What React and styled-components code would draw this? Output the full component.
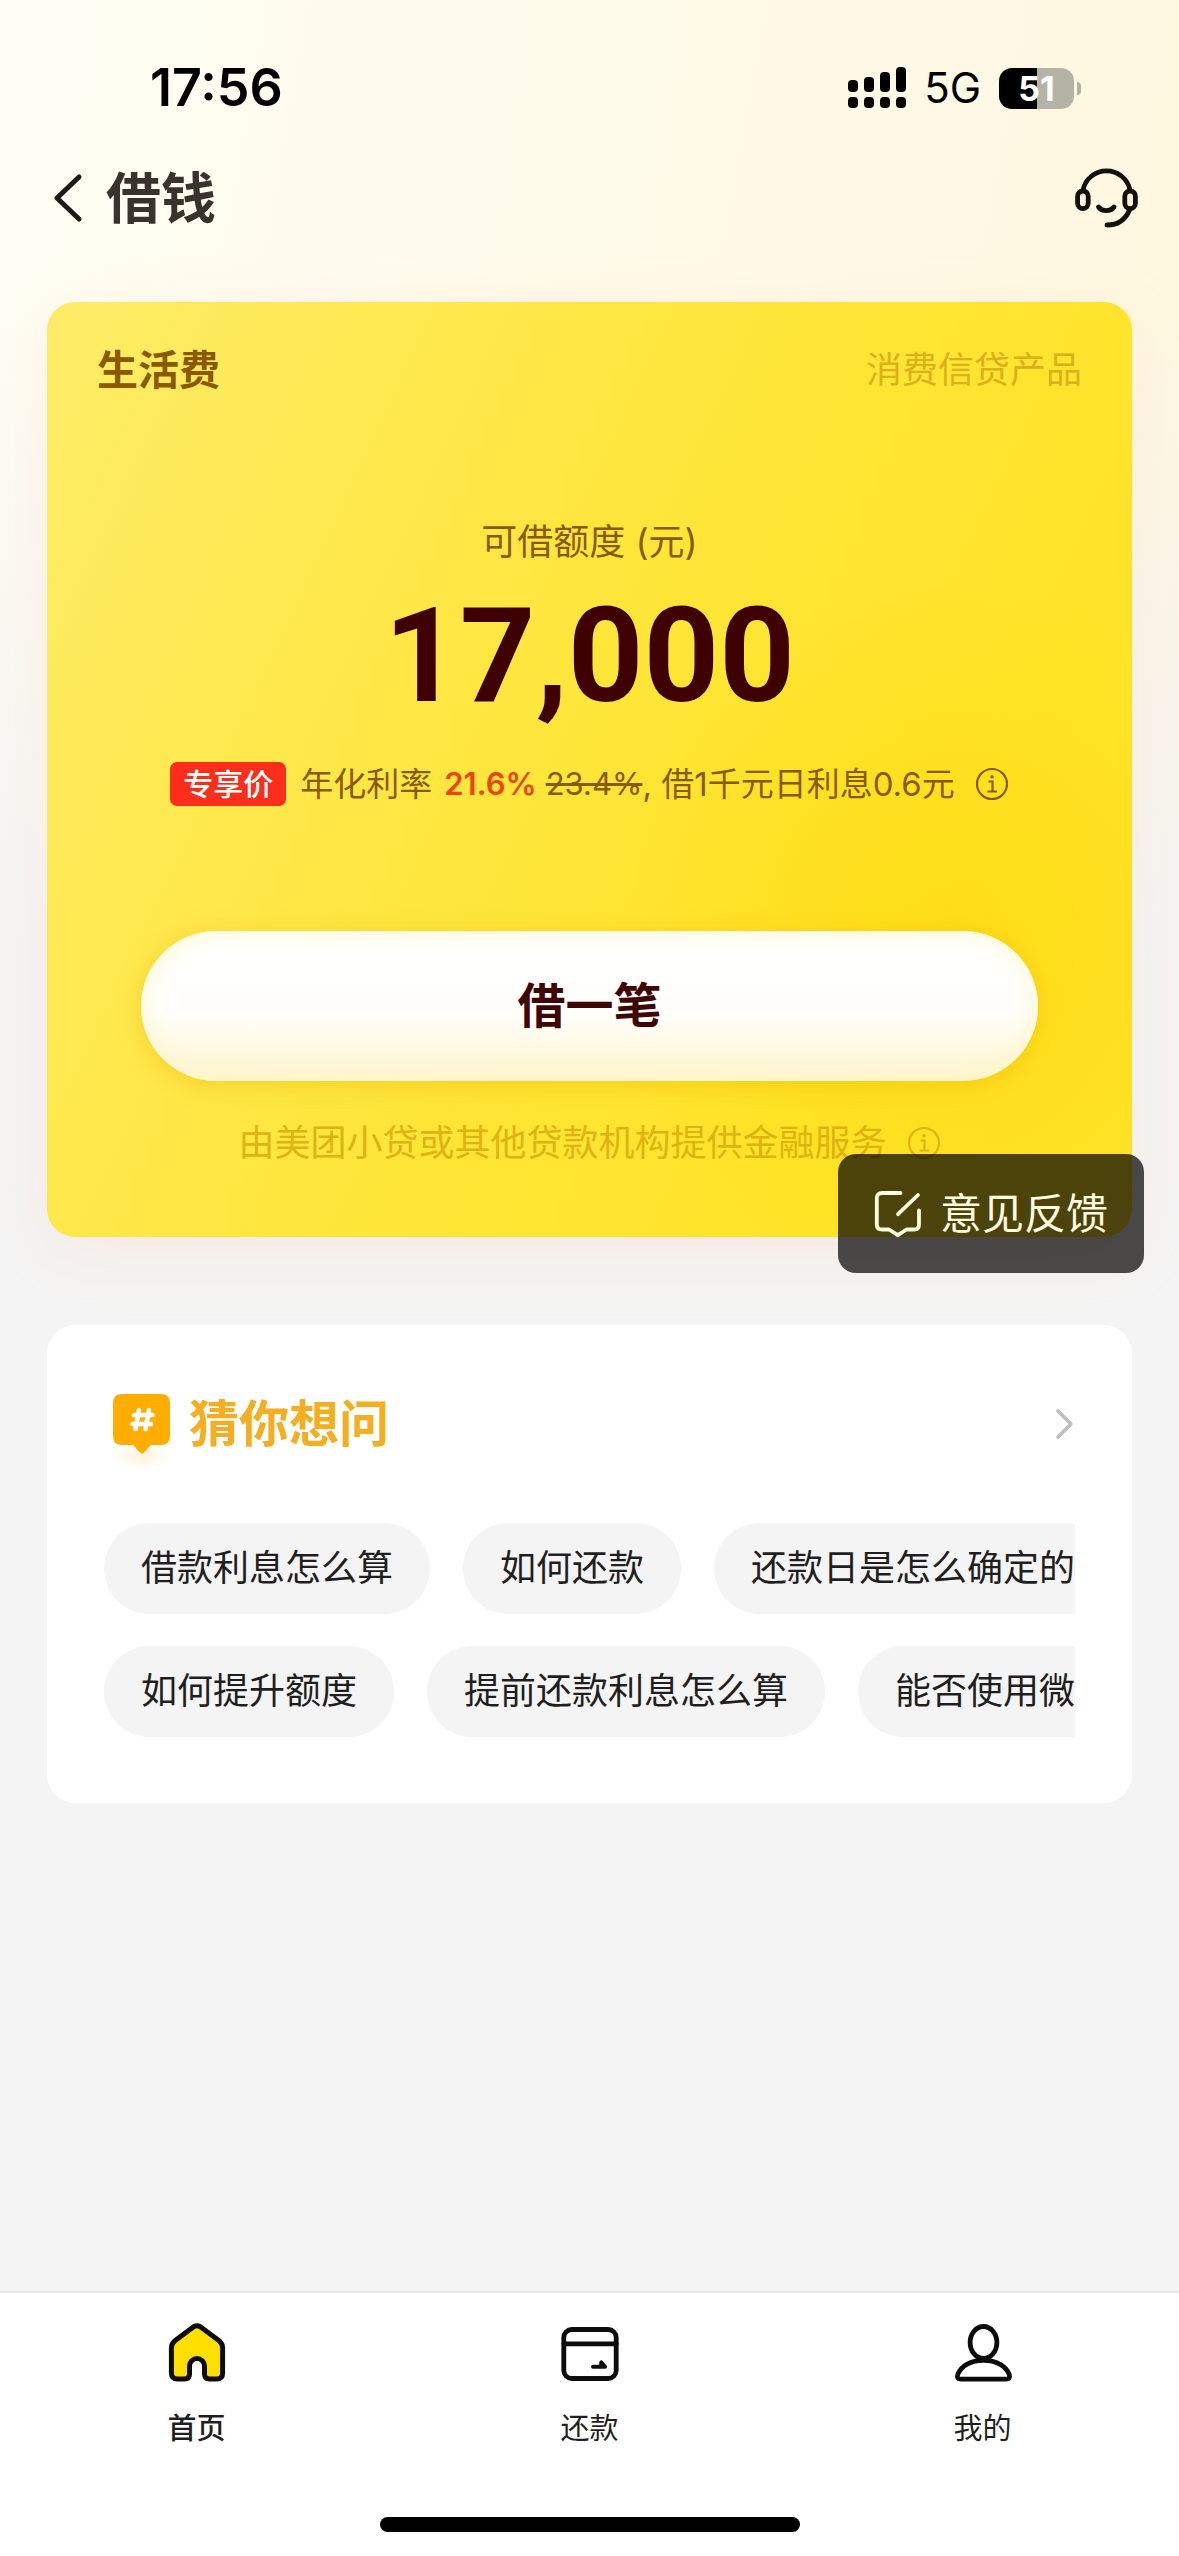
import React from "react";
import styled, { createGlobalStyle } from "styled-components";

// ---------- Global ----------
const GlobalStyle = createGlobalStyle`
  * {
    box-sizing: border-box;
  }
  body {
    margin: 0;
    background: #f4f4f4;
    font-family: Inter, "Noto Sans CJK SC", sans-serif;
    color: #1f1f1f;
  }
  button {
    border: 0;
    padding: 0;
    background: none;
    font-family: inherit;
    color: inherit;
    cursor: pointer;
  }
  a {
    color: inherit;
    text-decoration: none;
  }
  svg {
    display: block;
    flex: none;
  }
`;

// ---------- Styled Components ----------
const Page = styled.div`
  min-height: 100vh;
  display: flex;
  flex-direction: column;
  background:
    linear-gradient(180deg, rgba(244, 244, 244, 0) 300px, #f4f4f4 960px),
    linear-gradient(100deg, #fffdf4 0%, #fefaea 35%, #fef8e2 70%, #fdf4d9 100%);
`;

const StatusBar = styled.div`
  display: flex;
  justify-content: space-between;
  align-items: center;
  padding: 56px 98px 0 150px;
  line-height: 64px;
  color: #000;
`;

const Clock = styled.time`
  font-size: 52px;
  font-weight: 600;
`;

const StatusIcons = styled.div`
  display: flex;
  align-items: center;
  gap: 18px;
`;

const Network = styled.span`
  font-size: 42px;
`;

const Battery = styled.span`
  display: flex;
  align-items: center;
  gap: 3px;
  &::after {
    content: "";
    width: 4px;
    height: 13px;
    border-radius: 0 6px 6px 0;
    background: #b5b3a6;
  }
`;

const BatteryLevel = styled.span`
  width: 75px;
  border-radius: 13px;
  background: linear-gradient(90deg, #000 51%, #b5b3a6 51%);
  color: #fff;
  font-size: 34px;
  font-weight: 700;
  line-height: 41px;
  text-align: center;
`;

const NavBar = styled.header`
  display: flex;
  justify-content: space-between;
  align-items: center;
  padding: 0 40px 0 52px;
  height: 156px;
`;

const BackButton = styled.button`
  display: flex;
  align-items: center;
  gap: 22px;
`;

const PageTitle = styled.h1`
  margin: 0;
  font-size: 55px;
  line-height: 64px;
  font-weight: 700;
  color: #3a322c;
`;

const Main = styled.main`
  flex: 1;
  display: flex;
  flex-direction: column;
  gap: 88px;
  padding: 26px 47px 48px;
`;

const LoanCard = styled.section`
  position: relative;
  display: flex;
  flex-direction: column;
  align-items: center;
  padding: 44px 50px 70px;
  border-radius: 28px;
  color: #8a5a00;
  background:
    radial-gradient(circle at 84% 68%, rgba(255, 219, 18, 0.8) 0%, rgba(255, 222, 24, 0) 32%),
    linear-gradient(115deg, #fdec68 0%, #fee84c 28%, #fee536 52%, #fee428 78%, #ffe32c 100%);
  box-shadow: 0 16px 60px rgba(255, 205, 180, 0.26);
`;

const CardHeader = styled.div`
  align-self: stretch;
  display: flex;
  justify-content: space-between;
  align-items: center;
  line-height: 48px;
`;

const ProductName = styled.h2`
  margin: 0;
  font-size: 41px;
  font-weight: 700;
`;

const ProductKind = styled.span`
  font-size: 36px;
  color: #dcb01a;
`;

const QuotaLabel = styled.p`
  margin: 124px 0 0;
  font-size: 36px;
  line-height: 48px;
`;

const Quota = styled.strong`
  margin-top: 20px;
  font-family: Roboto, sans-serif;
  font-size: 132px;
  line-height: 140px;
  font-weight: 700;
  color: #3f0000;
`;

const RateRow = styled.div`
  display: flex;
  align-items: center;
  margin-top: 36px;
  font-size: 33px;
  line-height: 44px;
  white-space: nowrap;
`;

const RateTag = styled.span`
  margin-right: 14px;
  padding: 0 13px;
  border-radius: 7px;
  background: #fb2e1b;
  color: #fff;
  font-size: 30px;
  font-weight: 500;
`;

const Rate = styled.b`
  margin: 0 9px 0 12px;
  font-size: 31px;
  font-weight: 600;
  color: #ee4408;
`;

const OldRate = styled.s`
  font-size: 31px;
`;

const InfoButton = styled.button`
  margin-left: 20px;
  color: inherit;
`;

const BorrowButton = styled.button`
  align-self: stretch;
  margin: 125px 44px 0;
  border-radius: 75px;
  background: linear-gradient(180deg, #fff 0%, #fffefa 55%, #fdf5cf 100%);
  box-shadow:
    inset 0 0 24px rgba(255, 245, 190, 0.8),
    0 4px 24px rgba(236, 176, 0, 0.4);
  color: #3f0606;
  font-size: 48px;
  line-height: 150px;
  font-weight: 700;
`;

const Provider = styled.div`
  display: flex;
  align-items: center;
  margin-top: 38px;
  font-size: 36px;
  line-height: 48px;
  color: #deb312;
  white-space: nowrap;
`;

// floats over the lower right corner of the loan card
const FeedbackButton = styled.button`
  position: absolute;
  right: -12px;
  bottom: -36px;
  display: flex;
  align-items: center;
  gap: 18px;
  padding: 0 36px;
  border-radius: 18px;
  background: rgba(0, 0, 0, 0.7);
  color: #fffbe0;
  font-size: 42px;
  line-height: 119px;
`;

const FaqCard = styled.section`
  padding: 69px 57px 66px;
  border-radius: 28px;
  background: #fff;
`;

const FaqHeader = styled.a`
  display: flex;
  align-items: center;
  gap: 18px;
  padding-left: 9px;
`;

const FaqTitle = styled.h2`
  flex: 1;
  margin: 0;
  font-size: 50px;
  line-height: 60px;
  font-weight: 700;
  color: #f5ae20;
`;

const ChipRows = styled.div`
  display: grid;
  gap: 32px;
  margin-top: 69px;
  overflow: hidden;
`;

const ChipRow = styled.div`
  display: flex;
  gap: 33px;
`;

const Chip = styled.button`
  flex: none;
  padding: 0 37px;
  border-radius: 46px;
  background: #f4f4f4;
  font-size: 36px;
  line-height: 91px;
  white-space: nowrap;
`;

const Footer = styled.footer`
  display: flex;
  flex-direction: column;
  align-items: center;
  border-top: 2px solid #e6e8e8;
  background: #fff;
  padding-bottom: 24px;
`;

const TabBar = styled.nav`
  align-self: stretch;
  display: grid;
  grid-template-columns: repeat(3, 1fr);
  padding: 29px 0 68px;
`;

const Tab = styled.a`
  display: flex;
  flex-direction: column;
  align-items: center;
  gap: 27px;
  font-size: 29px;
  line-height: 40px;
  font-weight: ${(props) => (props.$active ? 500 : 400)};
`;

const HomeIndicator = styled.div`
  width: 420px;
  height: 15px;
  border-radius: 8px;
  background: #000;
`;

// ---------- Icons ----------
const SignalIcon = () => (
  <svg width="58" height="42" viewBox="0 0 58 42" fill="#000" aria-hidden="true">
    <rect x="0" y="13" width="10" height="12" rx="4" />
    <rect x="16" y="10" width="10" height="15" rx="4" />
    <rect x="32" y="5" width="10" height="20" rx="4" />
    <rect x="48" y="0" width="10" height="25" rx="4" />
    <rect x="0" y="30" width="10" height="11" rx="4" />
    <rect x="16" y="30" width="10" height="11" rx="4" />
    <rect x="32" y="30" width="10" height="11" rx="4" />
    <rect x="48" y="30" width="10" height="11" rx="4" />
  </svg>
);

const BackIcon = () => (
  <svg width="32" height="50" viewBox="0 0 32 50" fill="none" stroke="#1f1a17" strokeWidth="5" strokeLinecap="round" strokeLinejoin="round" aria-hidden="true">
    <path d="M27 4 L5 25 L27 46" />
  </svg>
);

const HeadsetIcon = () => (
  <svg width="64" height="60" viewBox="0 0 64 60" fill="none" stroke="#14100c" strokeWidth="4.8" strokeLinecap="round" aria-hidden="true">
    <path d="M8 22 A24 24 0 0 1 55 22" />
    <rect x="2.6" y="23" width="10.6" height="17.6" rx="5.3" />
    <rect x="49.8" y="23" width="10.6" height="17.6" rx="5.3" />
    <path d="M54.5 42 C50.5 51.5 42.5 57 32 57" />
    <path d="M23.5 39 C27 43.8 35.5 43.8 39 39" />
  </svg>
);

const InfoIcon = () => (
  <svg width="34" height="34" viewBox="0 0 34 34" fill="none" stroke="currentColor" strokeWidth="2.2" aria-hidden="true">
    <circle cx="17" cy="17" r="15" />
    <path d="M13.5 14.5 H17.5 V24.5 M12.5 24.5 H22" />
    <circle cx="17" cy="9.8" r="1.7" fill="currentColor" stroke="none" />
  </svg>
);

const FeedbackIcon = () => (
  <svg width="48" height="48" viewBox="0 0 48 48" fill="none" stroke="currentColor" strokeWidth="3.8" strokeLinecap="round" strokeLinejoin="round" aria-hidden="true">
    <path d="M26.5 3 H8 Q2.8 3 2.8 8 V34.5 Q2.8 39.5 8 39.5 H15 L23.8 45.2 L32.5 39.5 H40 Q45 39.5 45 34.5 V20.5" />
    <path d="M24 24.2 L44 5" />
  </svg>
);

const HashIcon = () => (
  <svg width="58" height="60" viewBox="0 0 58 60" overflow="visible" aria-hidden="true">
    <defs>
      <radialGradient id="glow">
        <stop offset="0" stopColor="#ffb000" stopOpacity="0.16" />
        <stop offset="1" stopColor="#ffb000" stopOpacity="0" />
      </radialGradient>
    </defs>
    <ellipse cx="29" cy="62" rx="28" ry="14" fill="url(#glow)" />
    <path d="M9 0 H48 Q57 0 57 9 V42 Q57 51 48 51 H38 L31 58.5 Q29 60.5 27 58.5 L20 51 H9 Q0 51 0 42 V9 Q0 0 9 0Z" fill="#ffae00" />
    <path d="M26 16 L22.5 35 M36 16 L32.5 35 M21 21 H39.5 M19.5 30 H38" stroke="#fff" strokeWidth="4.6" strokeLinecap="round" />
  </svg>
);

const ArrowIcon = () => (
  <svg width="20" height="32" viewBox="0 0 20 32" fill="none" stroke="#bdbdbd" strokeWidth="3.6" strokeLinecap="round" strokeLinejoin="round" aria-hidden="true">
    <path d="M3 3 L16 16 L3 29" />
  </svg>
);

const HomeIcon = () => (
  <svg width="60" height="60" viewBox="0 0 60 60" fill="#ffdf00" stroke="#0c0c0c" strokeWidth="5" strokeLinejoin="round" aria-hidden="true">
    <path d="M27 4.6 Q30 2.8 33 4.6 L51.5 18.2 Q55.6 21.3 55.6 26 V51 Q55.6 57 49.6 57 H42.5 Q37.5 57 37.5 52 V44 A7.5 7.5 0 0 0 22.5 44 V52 Q22.5 57 17.5 57 H10.4 Q4.4 57 4.4 51 V26 Q4.4 21.3 8.5 18.2 Z" />
  </svg>
);

const RepayIcon = () => (
  <svg width="60" height="60" viewBox="0 0 60 60" fill="none" stroke="#0c0c0c" strokeWidth="4.8" strokeLinecap="round" strokeLinejoin="round" aria-hidden="true">
    <rect x="3.8" y="7.5" width="52.4" height="49" rx="8" />
    <path d="M3.8 21.8 H56.2" />
    <path d="M33 44.8 H45 L41.2 40.4 V44" strokeWidth="4" />
  </svg>
);

const MineIcon = () => (
  <svg width="60" height="60" viewBox="0 0 60 60" fill="none" stroke="#0c0c0c" strokeWidth="4.8" strokeLinejoin="round" aria-hidden="true">
    <ellipse cx="30.5" cy="20.5" rx="13.4" ry="16" />
    <path d="M8 57.2 H53 Q57.6 57.2 56.3 52.6 C52.8 43.6 43 38.4 30.5 38.4 C18 38.4 8.2 43.6 4.7 52.6 Q3.4 57.2 8 57.2 Z" />
  </svg>
);

// ---------- Data ----------
const QUESTIONS = [
  ["借款利息怎么算", "如何还款", "还款日是怎么确定的"],
  ["如何提升额度", "提前还款利息怎么算", "能否使用微信还款"]
];

const TABS = [
  { label: "首页", icon: <HomeIcon />, active: true },
  { label: "还款", icon: <RepayIcon /> },
  { label: "我的", icon: <MineIcon /> }
];

// ---------- React Component ----------
export default function App() {
  return (
    <Page>
      <GlobalStyle />

      <StatusBar>
        <Clock>17:56</Clock>
        <StatusIcons>
          <SignalIcon />
          <Network>5G</Network>
          <Battery>
            <BatteryLevel>51</BatteryLevel>
          </Battery>
        </StatusIcons>
      </StatusBar>

      <NavBar>
        <BackButton>
          <BackIcon />
          <PageTitle>借钱</PageTitle>
        </BackButton>
        <button aria-label="客服">
          <HeadsetIcon />
        </button>
      </NavBar>

      <Main>
        <LoanCard>
          <CardHeader>
            <ProductName>生活费</ProductName>
            <ProductKind>消费信贷产品</ProductKind>
          </CardHeader>

          <QuotaLabel>可借额度 (元)</QuotaLabel>
          <Quota>17,000</Quota>

          <RateRow>
            <RateTag>专享价</RateTag>
            <span>年化利率</span>
            <Rate>21.6%</Rate>
            <OldRate>23.4%</OldRate>
            <span>, 借1千元日利息0.6元</span>
            <InfoButton aria-label="利率说明">
              <InfoIcon />
            </InfoButton>
          </RateRow>

          <BorrowButton>借一笔</BorrowButton>

          <Provider>
            <span>由美团小贷或其他贷款机构提供金融服务</span>
            <InfoButton aria-label="服务说明">
              <InfoIcon />
            </InfoButton>
          </Provider>

          <FeedbackButton>
            <FeedbackIcon />
            意见反馈
          </FeedbackButton>
        </LoanCard>

        <FaqCard>
          <FaqHeader href="#faq">
            <HashIcon />
            <FaqTitle>猜你想问</FaqTitle>
            <ArrowIcon />
          </FaqHeader>
          <ChipRows>
            {QUESTIONS.map((row) => (
              <ChipRow key={row[0]}>
                {row.map((question) => (
                  <Chip key={question}>{question}</Chip>
                ))}
              </ChipRow>
            ))}
          </ChipRows>
        </FaqCard>
      </Main>

      <Footer>
        <TabBar>
          {TABS.map((tab) => (
            <Tab key={tab.label} href="#" $active={tab.active}>
              {tab.icon}
              {tab.label}
            </Tab>
          ))}
        </TabBar>
        <HomeIndicator />
      </Footer>
    </Page>
  );
}
